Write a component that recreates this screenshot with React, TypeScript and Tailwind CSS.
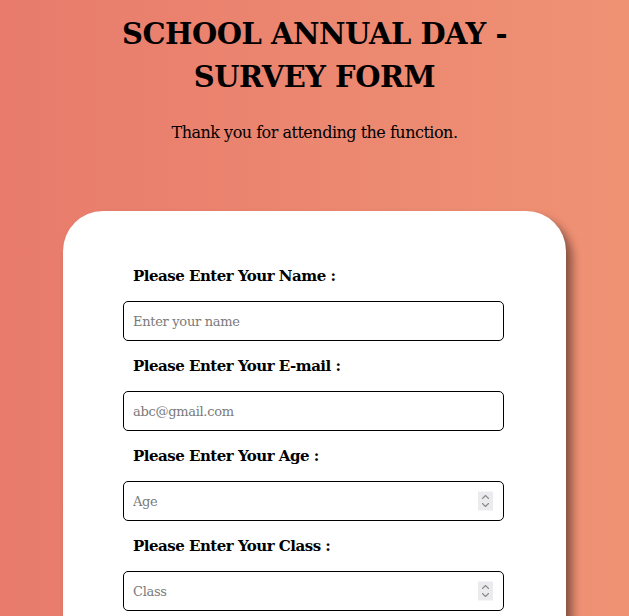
import React from "react";

const fields = [
  { label: "Please Enter Your Name :", placeholder: "Enter your name", type: "text", spin: false },
  { label: "Please Enter Your E-mail :", placeholder: "abc@gmail.com", type: "email", spin: false },
  { label: "Please Enter Your Age :", placeholder: "Age", type: "number", spin: true },
  { label: "Please Enter Your Class :", placeholder: "Class", type: "number", spin: true },
];

function Spinner() {
  return (
    <div className="pointer-events-none absolute right-[11px] top-1/2 flex h-[19px] w-[15px] -translate-y-1/2 items-center justify-center bg-[#ebebef]">
      <svg width="9" height="15" viewBox="0 0 9 15" fill="none" stroke="#8a8a8a" strokeWidth="1.1" strokeLinecap="round" strokeLinejoin="round">
        <path d="M1.5 5 L4.5 2 L7.5 5" />
        <path d="M1.5 10 L4.5 13 L7.5 10" />
      </svg>
    </div>
  );
}

export default function App() {
  return (
    <div className="min-h-screen overflow-hidden bg-gradient-to-r from-[#e87b6c] to-[#ef9274] font-['DejaVu_Serif',serif] text-black">
      <h1 className="pt-[13px] text-center text-[29px] font-bold leading-[43px] tracking-[-0.5px]">
        SCHOOL ANNUAL DAY -
        <br />
        SURVEY FORM
      </h1>
      <p className="mt-[22px] text-center text-[16px] leading-[24px] tracking-[-0.5px]">
        Thank you for attending the function.
      </p>
      <div className="mx-auto mt-[66px] w-[503px] rounded-[40px] bg-white px-[60px] pb-[40px] pt-[53px] shadow-[6px_7px_10px_rgba(0,0,0,0.45)]">
        {fields.map((f) => (
          <div key={f.label} className="flex flex-col">
            <label className="mb-[13px] ml-[10px] text-[15px] font-bold leading-[24px] tracking-[-0.5px]">
              {f.label}
            </label>
            <div className="relative mb-[13px] w-[381px]">
              <input
                type={f.type}
                placeholder={f.placeholder}
                className="h-[40px] w-full rounded-[5px] border border-black bg-white pl-[9px] pr-[10px] text-[13px] tracking-[-0.3px] placeholder:text-[#7a7a7a] [appearance:textfield] [&::-webkit-inner-spin-button]:appearance-none"
              />
              {f.spin && <Spinner />}
            </div>
          </div>
        ))}
      </div>
    </div>
  );
}
